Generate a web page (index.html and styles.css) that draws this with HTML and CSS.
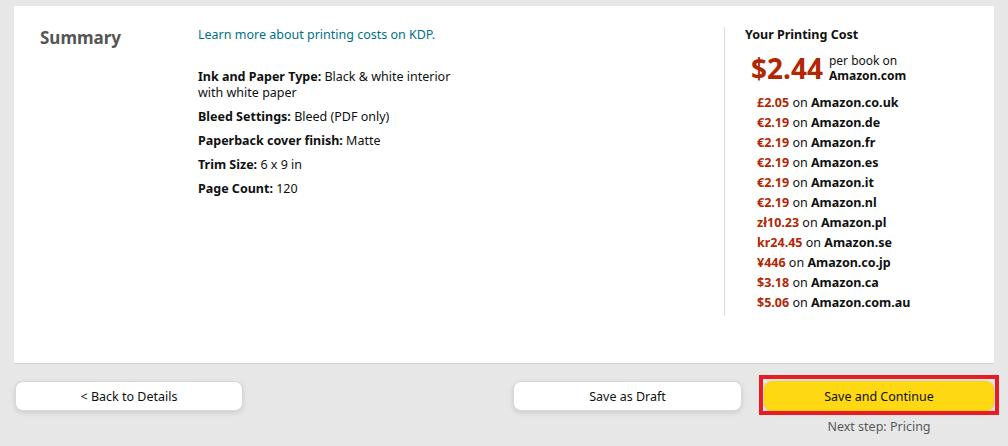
FILE: index.html
```html
<!DOCTYPE html>
<html lang="en">
<head>
<meta charset="utf-8">
<title>Summary</title>
<link rel="stylesheet" href="styles.css">
</head>
<body>
<main class="panel">
  <h2 class="title">Summary</h2>
  <section class="details">
    <a class="learn" href="#">Learn more about printing costs on KDP.</a>
    <ul class="specs">
      <li><b>Ink and Paper Type:</b> Black &amp; white interior<br>with white paper</li>
      <li><b>Bleed Settings:</b> Bleed (PDF only)</li>
      <li><b>Paperback cover finish:</b> Matte</li>
      <li><b>Trim Size:</b> 6 x 9 in</li>
      <li><b>Page Count:</b> 120</li>
    </ul>
  </section>
  <aside class="cost">
    <h3 class="cost-title">Your Printing Cost</h3>
    <div class="main-price">
      <span class="big">$2.44</span>
      <span class="per">per book on<br><b>Amazon.com</b></span>
    </div>
    <ul class="markets">
      <li><span class="p">£2.05</span> on <b>Amazon.co.uk</b></li>
      <li><span class="p">€2.19</span> on <b>Amazon.de</b></li>
      <li><span class="p">€2.19</span> on <b>Amazon.fr</b></li>
      <li><span class="p">€2.19</span> on <b>Amazon.es</b></li>
      <li><span class="p">€2.19</span> on <b>Amazon.it</b></li>
      <li><span class="p">€2.19</span> on <b>Amazon.nl</b></li>
      <li><span class="p">zł10.23</span> on <b>Amazon.pl</b></li>
      <li><span class="p">kr24.45</span> on <b>Amazon.se</b></li>
      <li><span class="p">¥446</span> on <b>Amazon.co.jp</b></li>
      <li><span class="p">$3.18</span> on <b>Amazon.ca</b></li>
      <li><span class="p">$5.06</span> on <b>Amazon.com.au</b></li>
    </ul>
  </aside>
</main>
<footer class="actions">
  <button class="btn back">&lt; Back to Details</button>
  <div class="spacer"></div>
  <button class="btn draft">Save as Draft</button>
  <div class="continue-wrap">
    <button class="btn primary">Save and Continue</button>
    <div class="next">Next step: Pricing</div>
  </div>
</footer>
</body>
</html>
```
FILE: styles.css
```css
* { box-sizing: border-box; }
html, body { margin: 0; padding: 0; }
body {
  background: #e7e7e7;
  font-family: "Noto Sans", "Open Sans", sans-serif;
  font-size: 12.5px;
  color: #0f1111;
  padding: 6px 14px 0 14px;
}
.panel {
  background: #fff;
  height: 358px;
  border-bottom: 1px solid #cfcfcf;
  display: flex;
  padding: 20px 0 0 26px;
}
.title {
  margin: 0;
  width: 158px;
  font-size: 17px;
  font-weight: 700;
  color: #555;
  line-height: 24px;
}
.details {
  width: 526px;
  padding-top: 1px;
}
.learn {
  display: block;
  color: #007185;
  text-decoration: none;
  line-height: 16px;
}
.specs {
  list-style: none;
  margin: 26px 0 0 0;
  padding: 0;
}
.specs li {
  line-height: 16px;
  margin-bottom: 8px;
}
.cost {
  border-left: 1px solid #ddd;
  margin-top: 1px;
  height: 289px;
  padding: 0 0 0 20px;
}
.cost-title {
  margin: 0;
  font-size: 12.5px;
  font-weight: 700;
  line-height: 16px;
}
.main-price {
  display: flex;
  align-items: flex-start;
  margin: 8px 0 0 6px;
}
.big {
  font-size: 28px;
  font-weight: 700;
  color: #b12704;
  line-height: 34px;
  margin-right: 6px;
}
.per {
  font-size: 12px;
  line-height: 15px;
  padding-top: 2px;
}
.markets {
  list-style: none;
  margin: 8px 0 0 12px;
  padding: 0;
}
.markets li {
  line-height: 20px;
}
.p { color: #b12704; font-weight: 700; }
.actions {
  display: flex;
  align-items: flex-start;
  padding: 17px 0 0 1px;
}
.btn {
  font-family: inherit;
  font-size: 12.5px;
  color: #0f1111;
  background: #fff;
  border: 1px solid #d5d9d9;
  border-radius: 8px;
  height: 30px;
  box-shadow: 0 2px 5px rgba(15,17,17,0.12);
  cursor: pointer;
}
.back { width: 228px; }
.spacer { flex: 1; }
.draft { width: 229px; margin-right: 22px; }
.continue-wrap {
  width: 230px;
  display: flex;
  flex-direction: column;
  align-items: center;
}
.primary {
  position: relative;
  width: 230px;
  background: #ffd814;
  border-color: #fcd200;
}
.primary::after {
  content: "";
  position: absolute;
  top: -7px;
  left: -6px;
  right: -6px;
  bottom: -5px;
  border: 4px solid #e81c24;
}
.next {
  color: #565959;
  margin-top: 8px;
  line-height: 16px;
}
```
